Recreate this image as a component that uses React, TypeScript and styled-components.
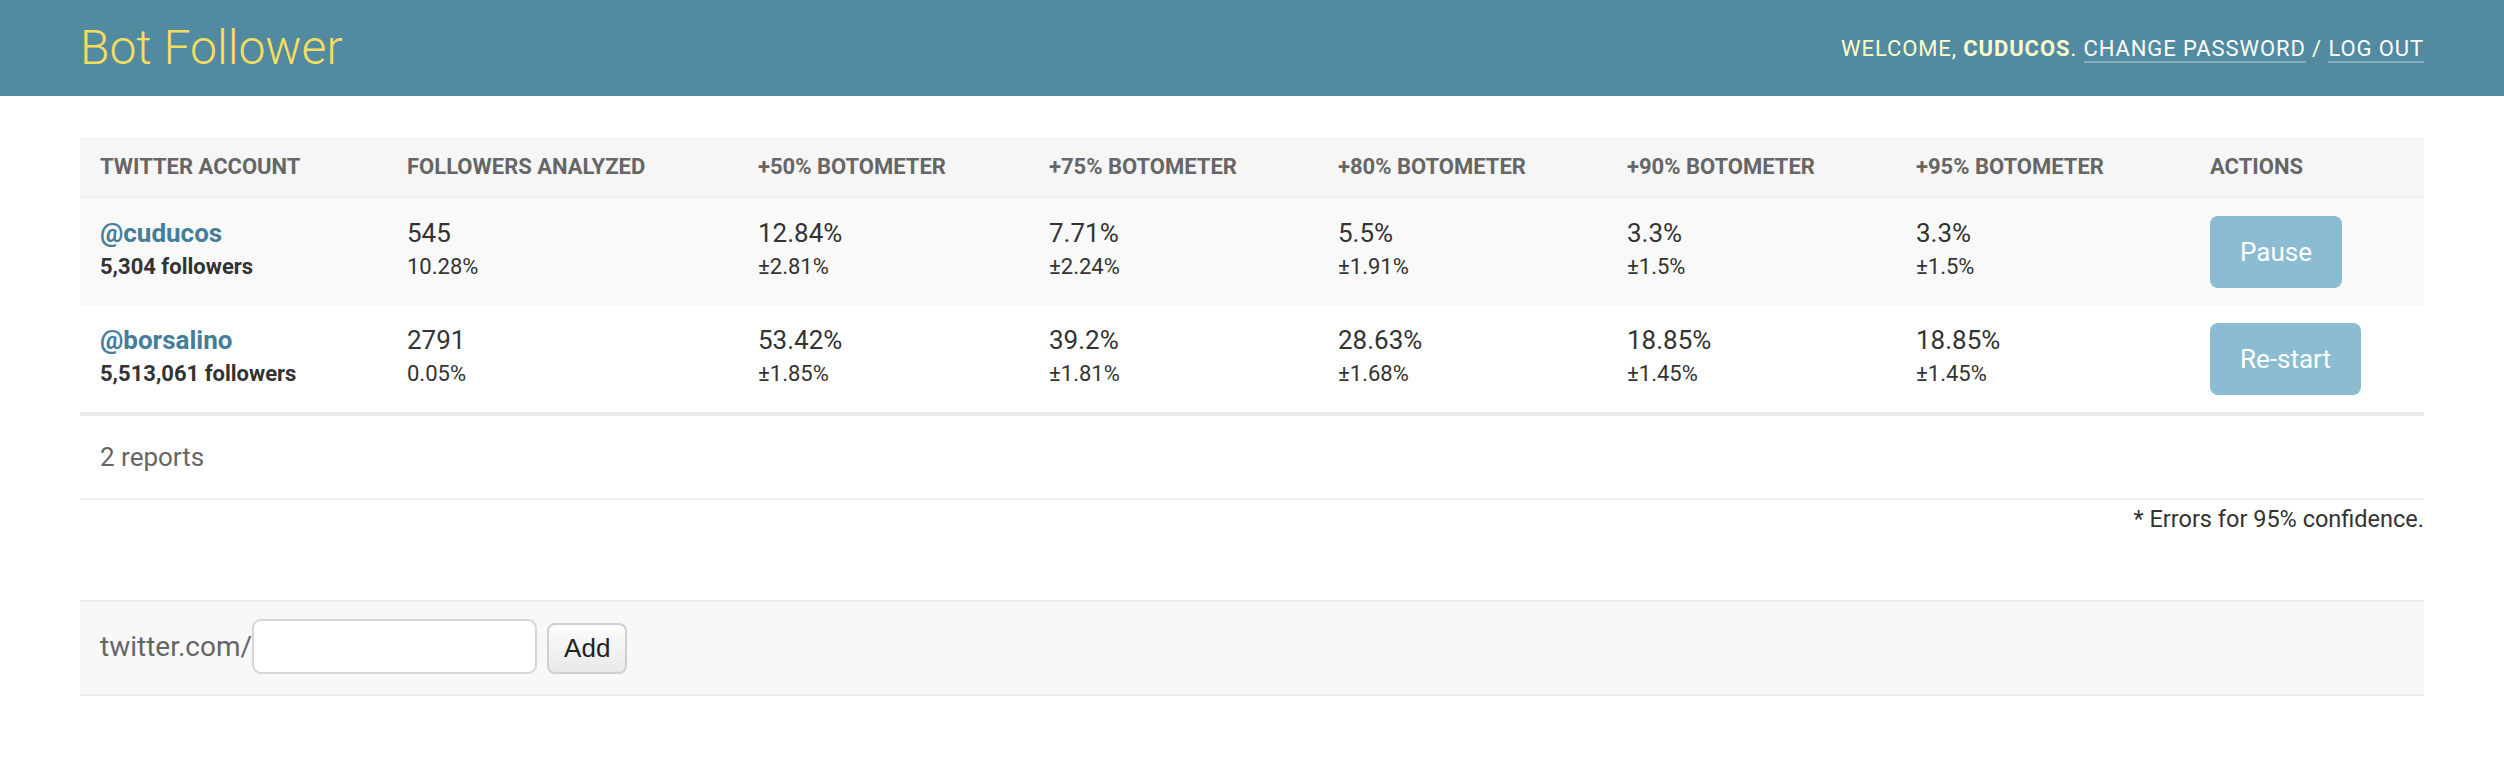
import React, { useState } from "react";
import styled, { createGlobalStyle } from "styled-components";

const COLUMNS = [
  { title: "Twitter account", width: 307 },
  { title: "Followers analyzed", width: 351 },
  { title: "+50% Botometer", width: 291 },
  { title: "+75% Botometer", width: 289 },
  { title: "+80% Botometer", width: 289 },
  { title: "+90% Botometer", width: 289 },
  { title: "+95% Botometer", width: 294 },
  { title: "Actions", width: 234 },
];

const REPORTS = [
  {
    account: "cuducos",
    followers: "5,304",
    analyzed: "545",
    analyzedShare: "10.28%",
    scores: [
      ["12.84%", "±2.81%"],
      ["7.71%", "±2.24%"],
      ["5.5%", "±1.91%"],
      ["3.3%", "±1.5%"],
      ["3.3%", "±1.5%"],
    ],
    action: "Pause",
  },
  {
    account: "borsalino",
    followers: "5,513,061",
    analyzed: "2791",
    analyzedShare: "0.05%",
    scores: [
      ["53.42%", "±1.85%"],
      ["39.2%", "±1.81%"],
      ["28.63%", "±1.68%"],
      ["18.85%", "±1.45%"],
      ["18.85%", "±1.45%"],
    ],
    action: "Re-start",
  },
];

const App = () => {
  const [screenName, setScreenName] = useState("");

  return (
    <>
      <GlobalStyle />
      <Header>
        <Branding>Bot Follower</Branding>
        <UserTools>
          Welcome, <strong>cuducos</strong>. <UserLink href="#">Change password</UserLink> /{" "}
          <UserLink href="#">Log out</UserLink>
        </UserTools>
      </Header>

      <Content>
        <ResultsTable>
          <colgroup>
            {COLUMNS.map((column) => (
              <Col key={column.title} $width={column.width} />
            ))}
          </colgroup>
          <thead>
            <tr>
              {COLUMNS.map((column) => (
                <HeadCell key={column.title}>{column.title}</HeadCell>
              ))}
            </tr>
          </thead>
          <tbody>
            {REPORTS.map((report, index) => (
              <Row key={report.account} $striped={index % 2 === 0}>
                <Cell>
                  <MainLine>
                    <AccountLink href="#">@{report.account}</AccountLink>
                  </MainLine>
                  <SubLine $bold>{report.followers} followers</SubLine>
                </Cell>
                <Cell>
                  <MainLine>{report.analyzed}</MainLine>
                  <SubLine>{report.analyzedShare}</SubLine>
                </Cell>
                {report.scores.map(([value, error], i) => (
                  <Cell key={i}>
                    <MainLine>{value}</MainLine>
                    <SubLine>{error}</SubLine>
                  </Cell>
                ))}
                <Cell>
                  <ActionButton type="button">{report.action}</ActionButton>
                </Cell>
              </Row>
            ))}
          </tbody>
        </ResultsTable>

        <Paginator>2 reports</Paginator>
        <Footnote>* Errors for 95% confidence.</Footnote>

        <AddForm onSubmit={(e) => e.preventDefault()}>
          <AddLabel htmlFor="screen-name">twitter.com/</AddLabel>
          <AddInput
            id="screen-name"
            type="text"
            value={screenName}
            onChange={(e) => setScreenName(e.target.value)}
          />
          <AddButton type="submit">Add</AddButton>
        </AddForm>
      </Content>
    </>
  );
};

const GlobalStyle = createGlobalStyle`
  body {
    margin: 0;
    background: #fff;
    color: #333;
    font-family: Roboto, "Liberation Sans", sans-serif;
  }
`;

const Header = styled.header`
  display: flex;
  justify-content: space-between;
  align-items: center;
  padding: 20px 80px;
  background: #518aa1;
  color: #ffc;
`;

const Branding = styled.h1`
  margin: 0;
  font-size: 48px;
  line-height: 56px;
  font-weight: 300;
  color: #f5dd5d;
`;

const UserTools = styled.div`
  font-size: 22px;
  font-weight: 400;
  letter-spacing: 0.9px;
  text-transform: uppercase;
  color: #ffc;

  strong {
    font-weight: 700;
  }
`;

const UserLink = styled.a`
  color: #fff;
  text-decoration: none;
  border-bottom: 2px solid rgba(255, 255, 255, 0.3);
`;

const Content = styled.main`
  padding: 41px 80px 40px;
`;

const ResultsTable = styled.table`
  width: 100%;
  table-layout: fixed;
  border-collapse: separate;
  border-spacing: 0;
  border-bottom: 4px solid #eaeaea;
`;

const Col = styled.col<{ $width: number }>`
  width: ${(p) => p.$width}px;
`;

const HeadCell = styled.th`
  padding: 15px 20px;
  line-height: 29px;
  background: #f6f6f6;
  border-bottom: 2px solid #eee;
  color: #666;
  font-size: 22px;
  font-weight: 700;
  text-align: left;
  text-transform: uppercase;
  white-space: nowrap;
`;

const Row = styled.tr<{ $striped: boolean }>`
  background: ${(p) => (p.$striped ? "#f9f9f9" : "#fff")};

  & + & td {
    border-top: 2px solid #eee;
  }
`;

const Cell = styled.td`
  padding: 18px 20px 17px;
  vertical-align: top;
  white-space: nowrap;
`;

const MainLine = styled.div`
  font-size: 26px;
  line-height: 34px;
`;

const SubLine = styled.div<{ $bold?: boolean }>`
  font-size: 22px;
  line-height: 34px;
  font-weight: ${(p) => (p.$bold ? 700 : 400)};
`;

const AccountLink = styled.a`
  color: #447e9b;
  font-weight: 700;
  text-decoration: none;
`;

const ActionButton = styled.button`
  display: block;
  padding: 20px 30px;
  border: none;
  border-radius: 8px;
  background: #8bbcd1;
  color: #fff;
  font-family: inherit;
  font-size: 26px;
  line-height: 32px;
  cursor: pointer;
`;

const Paginator = styled.p`
  margin: 0;
  padding: 20px;
  line-height: 42px;
  font-size: 26px;
  color: #666;
  border-bottom: 2px solid #eee;
`;

const Footnote = styled.p`
  margin: 0;
  line-height: 38px;
  font-size: 23.5px;
  text-align: right;
`;

const AddForm = styled.form`
  display: flex;
  align-items: center;
  margin-top: 62px;
  padding: 17px 20px 20px;
  background: #f8f8f8;
  border-top: 2px solid #eee;
  border-bottom: 2px solid #eee;
`;

const AddLabel = styled.label`
  font-size: 28px;
  color: #666;
`;

const AddInput = styled.input`
  box-sizing: border-box;
  width: 285px;
  height: 55px;
  margin: 0;
  padding: 5px 12px;
  border: 2px solid #d6d6d6;
  border-radius: 9px;
  background: #fff;
  font-family: inherit;
  font-size: 26px;
  outline: none;
`;

const AddButton = styled.button`
  box-sizing: border-box;
  height: 51px;
  margin: 4px 0 0 10px;
  padding: 0 15px;
  border: 2px solid #d0d0d0;
  border-radius: 8px;
  background: linear-gradient(#fdfdfd, #e9e9e9);
  color: #222;
  font-family: "Liberation Sans", Arial, sans-serif;
  font-size: 26px;
`;

export default App;
